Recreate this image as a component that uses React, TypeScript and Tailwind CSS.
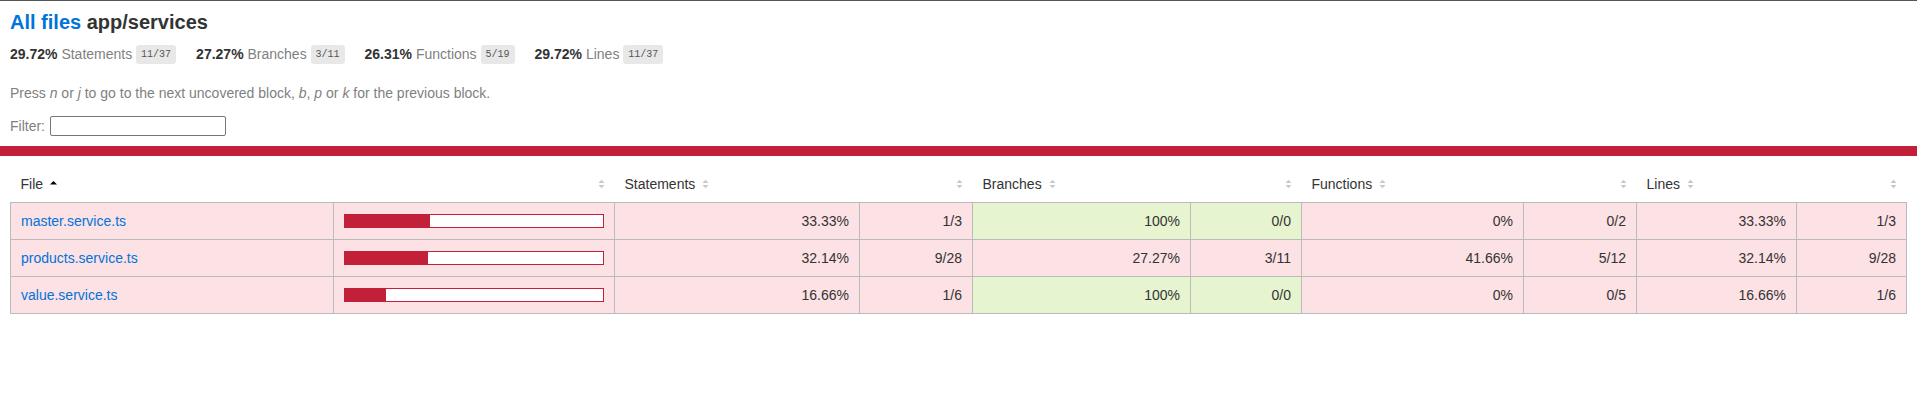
import React from 'react';

type Row = {
  file: string;
  pct: number;
  stmts: [string, string, boolean];
  branches: [string, string, boolean];
  functions: [string, string, boolean];
  lines: [string, string, boolean];
};

const rows: Row[] = [
  {
    file: 'master.service.ts',
    pct: 33.33,
    stmts: ['33.33%', '1/3', false],
    branches: ['100%', '0/0', true],
    functions: ['0%', '0/2', false],
    lines: ['33.33%', '1/3', false],
  },
  {
    file: 'products.service.ts',
    pct: 32.14,
    stmts: ['32.14%', '9/28', false],
    branches: ['27.27%', '3/11', false],
    functions: ['41.66%', '5/12', false],
    lines: ['32.14%', '9/28', false],
  },
  {
    file: 'value.service.ts',
    pct: 16.66,
    stmts: ['16.66%', '1/6', false],
    branches: ['100%', '0/0', true],
    functions: ['0%', '0/5', false],
    lines: ['16.66%', '1/6', false],
  },
];

const summary = [
  { pct: '29.72%', label: 'Statements', frac: '11/37' },
  { pct: '27.27%', label: 'Branches', frac: '3/11' },
  { pct: '26.31%', label: 'Functions', frac: '5/19' },
  { pct: '29.72%', label: 'Lines', frac: '11/37' },
];

const Sorter = ({ sorted }: { sorted?: boolean }) => (
  <svg width="7" height="10" viewBox="0 0 7 10" className="inline-block ml-[7px] align-baseline">
    {sorted ? (
      <path d="M0 5.5 L3.5 2 L7 5.5 Z" fill="#000" />
    ) : (
      <>
        <path d="M0.5 4 L3.5 0.8 L6.5 4 Z" fill="#c8c8c8" />
        <path d="M0.5 6 L3.5 9.2 L6.5 6 Z" fill="#c8c8c8" />
      </>
    )}
  </svg>
);

const cellBase = 'p-[10px] border-r border-[#bbb] text-right';
const thBase = 'p-[10px] font-normal whitespace-nowrap';

const Metric = ({ data }: { data: [string, string, boolean] }) => {
  const bg = data[2] ? 'bg-[rgb(230,245,208)]' : 'bg-[#FCE1E5]';
  return (
    <>
      <td className={`${cellBase} ${bg}`}>{data[0]}</td>
      <td className={`${cellBase} ${bg}`}>{data[1]}</td>
    </>
  );
};

export default function App() {
  return (
    <div className="min-h-screen bg-white text-[14px] leading-[16px] text-[#333] font-['Liberation_Sans',Arial,sans-serif] border-t border-[#555]">
      <div className="p-[10px]">
        <h1 className="text-[20px] leading-[23px] font-bold m-0">
          <a href="#" className="text-[#0074D9]">All files</a> app/services
        </h1>
        <div className="flex py-[10px] leading-[20px]">
          {summary.map((s) => (
            <div key={s.label} className="pr-[20px]">
              <span className="font-bold">{s.pct} </span>
              <span className="text-[#7f7f7f]">{s.label}</span>{' '}
              <span className="font-['Liberation_Mono',monospace] text-[10px] text-[#555] bg-[#E8E8E8] px-[5px] py-[4px] rounded-[3px] align-middle">
                {s.frac}
              </span>
            </div>
          ))}
        </div>
        <p className="mt-[10px] mb-[15px] text-[#7f7f7f]">
          Press <em>n</em> or <em>j</em> to go to the next uncovered block, <em>b</em>, <em>p</em> or{' '}
          <em>k</em> for the previous block.
        </p>
        <div className="text-[#7f7f7f] flex items-center h-[20px]">
          Filter:
          <input
            type="search"
            className="ml-[5px] w-[176px] h-[20px] border border-[#767676] rounded-[2px] bg-white px-[2px] text-[13px] outline-none"
          />
        </div>
      </div>
      <div className="h-[10px] bg-[#C21F39]" />
      <div className="p-[10px]">
        <table className="w-full table-fixed border-collapse">
          <colgroup>
            <col className="w-[323px]" />
            <col className="w-[281px]" />
            <col className="w-[245px]" />
            <col className="w-[113px]" />
            <col className="w-[218px]" />
            <col className="w-[111px]" />
            <col className="w-[222px]" />
            <col className="w-[113px]" />
            <col className="w-[160px]" />
            <col />
          </colgroup>
          <thead>
            <tr>
              <th className={`${thBase} text-left`}>
                File
                <Sorter sorted />
              </th>
              <th className={`${thBase} text-right`}><Sorter /></th>
              <th className={`${thBase} text-left`}>
                Statements
                <Sorter />
              </th>
              <th className={`${thBase} text-right`}><Sorter /></th>
              <th className={`${thBase} text-left`}>
                Branches
                <Sorter />
              </th>
              <th className={`${thBase} text-right`}><Sorter /></th>
              <th className={`${thBase} text-left`}>
                Functions
                <Sorter />
              </th>
              <th className={`${thBase} text-right`}><Sorter /></th>
              <th className={`${thBase} text-left`}>
                Lines
                <Sorter />
              </th>
              <th className={`${thBase} text-right`}><Sorter /></th>
            </tr>
          </thead>
          <tbody className="border border-[#bbb]">
            {rows.map((r) => (
              <tr key={r.file} className="border-b border-[#bbb]">
                <td className="p-[10px] border-r border-[#bbb] bg-[#FCE1E5] whitespace-nowrap">
                  <a href="#" className="text-[#0074D9]">{r.file}</a>
                </td>
                <td className="p-[10px] border-r border-[#bbb] bg-[#FCE1E5]">
                  <div className="flex border border-[#C21F39] h-[14px]">
                    <div className="h-[12px] bg-[#C21F39]" style={{ width: `${Math.floor(r.pct)}%` }} />
                    <div className="h-[12px] bg-white flex-1" />
                  </div>
                </td>
                <Metric data={r.stmts} />
                <Metric data={r.branches} />
                <Metric data={r.functions} />
                <Metric data={r.lines} />
              </tr>
            ))}
          </tbody>
        </table>
      </div>
    </div>
  );
}
